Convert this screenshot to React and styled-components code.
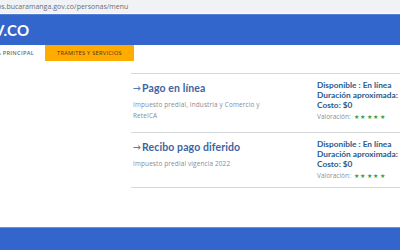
import React from "react";
import styled, { createGlobalStyle } from "styled-components";

const Global = createGlobalStyle`
  html, body { margin: 0; padding: 0; background: #fff; }
  body { width: 400px; height: 250px; overflow: hidden; font-family: "Open Sans", "Noto Sans", sans-serif; }
  #root { height: 250px; display: flex; flex-direction: column; }
`;

const UrlBar = styled.div`
  height: 13px;
  background: #f1f2f5;
  border-bottom: 1px solid #fafafb;
  display: flex;
  align-items: center;
  font-size: 7px;
  color: #6d6d72;
  white-space: nowrap;
  overflow: hidden;
  margin-left: -3px;
`;

const Header = styled.header`
  height: 30px;
  background: #3366cc;
  border-top: 1px solid #5580d6;
  display: flex;
  align-items: center;
  color: #fff;
  font-family: "Lato", sans-serif;
  font-weight: 700;
  font-size: 15px;
  letter-spacing: 0.2px;
  margin-left: -6px;
`;

const Nav = styled.nav`
  height: 16px;
  display: flex;
  align-items: stretch;
  margin-left: -3px;
`;

const NavItem = styled.div`
  display: flex;
  align-items: center;
  width: ${(p) => p.$w}px;
  background: ${(p) => (p.$active ? "#ffab00" : "transparent")};
  color: ${(p) => (p.$active ? "#3d3420" : "#6a6a6a")};
  font-size: 5.6px;
  font-weight: ${(p) => (p.$active ? 500 : 600)};
  letter-spacing: 0.3px;
  white-space: nowrap;
  justify-content: ${(p) => (p.$active ? "center" : "flex-start")};
`;

const Main = styled.main`
  flex: 1;
  padding: 12px 0 0 131px;
  display: flex;
  flex-direction: column;
`;

const Card = styled.div`
  display: grid;
  grid-template-columns: 184px 1fr;
  border-top: 1.5px solid #d6d9dc;
  box-shadow: 0 -0.5px 1px rgba(0, 0, 0, 0.08);
  height: ${(p) => p.$h}px;
  &:last-child { border-bottom: 1.5px solid #d6d9dc; }
`;

const Left = styled.div`
  padding: 8px 0 0 2px;
`;

const Title = styled.div`
  font-family: "Lato", sans-serif;
  font-size: 10.5px;
  font-weight: 700;
  color: #3c64a2;
  display: flex;
  align-items: center;
  gap: 1px;
  letter-spacing: 0.1px;
`;

const Arrow = styled.span`
  font-size: 8px;
  color: #5a78a8;
`;

const Desc = styled.div`
  margin-top: 5px;
  font-size: 6.4px;
  line-height: 11px;
  letter-spacing: 0.15px;
  color: #858b93;
  width: 132px;
`;

const Right = styled.div`
  padding: 6px 0 0 2px;
  display: flex;
  flex-direction: column;
`;

const Info = styled.div`
  font-family: "Lato", sans-serif;
  font-size: 8.3px;
  font-weight: 700;
  color: #2b5a8c;
  line-height: 10px;
  white-space: nowrap;
`;

const Rating = styled.div`
  margin-top: 2px;
  font-size: 6.5px;
  color: #8a9099;
  display: flex;
  align-items: center;
  gap: 3px;
  white-space: nowrap;
`;

const Stars = styled.span`
  color: #3a9d3f;
  font-size: 6px;
  letter-spacing: 1.6px;
`;

const Footer = styled.footer`
  height: 22px;
  background: #3366cc;
  border-top: 1px solid #6f8fd8;
`;

const cards = [
  { title: "Pago en línea", desc: "Impuesto predial, Industria y Comercio y ReteICA", h: 58 },
  { title: "Recibo pago diferido", desc: "Impuesto predial vigencia 2022", h: 54 },
];

export default function App() {
  return (
    <>
      <Global />
      <UrlBar>os.bucaramanga.gov.co/personas/menu</UrlBar>
      <Header>V.CO</Header>
      <Nav>
        <NavItem $w={48}>A PRINCIPAL</NavItem>
        <NavItem $w={89} $active>TRÁMITES Y SERVICIOS</NavItem>
      </Nav>
      <Main>
        {cards.map((c) => (
          <Card key={c.title} $h={c.h}>
            <Left>
              <Title>
                <Arrow>→</Arrow>
                {c.title}
              </Title>
              <Desc>{c.desc}</Desc>
            </Left>
            <Right>
              <Info>Disponible : En línea</Info>
              <Info>Duración aproximada:</Info>
              <Info>Costo: $0</Info>
              <Rating>
                Valoración: <Stars>★★★★★</Stars>
              </Rating>
            </Right>
          </Card>
        ))}
      </Main>
      <Footer />
    </>
  );
}
